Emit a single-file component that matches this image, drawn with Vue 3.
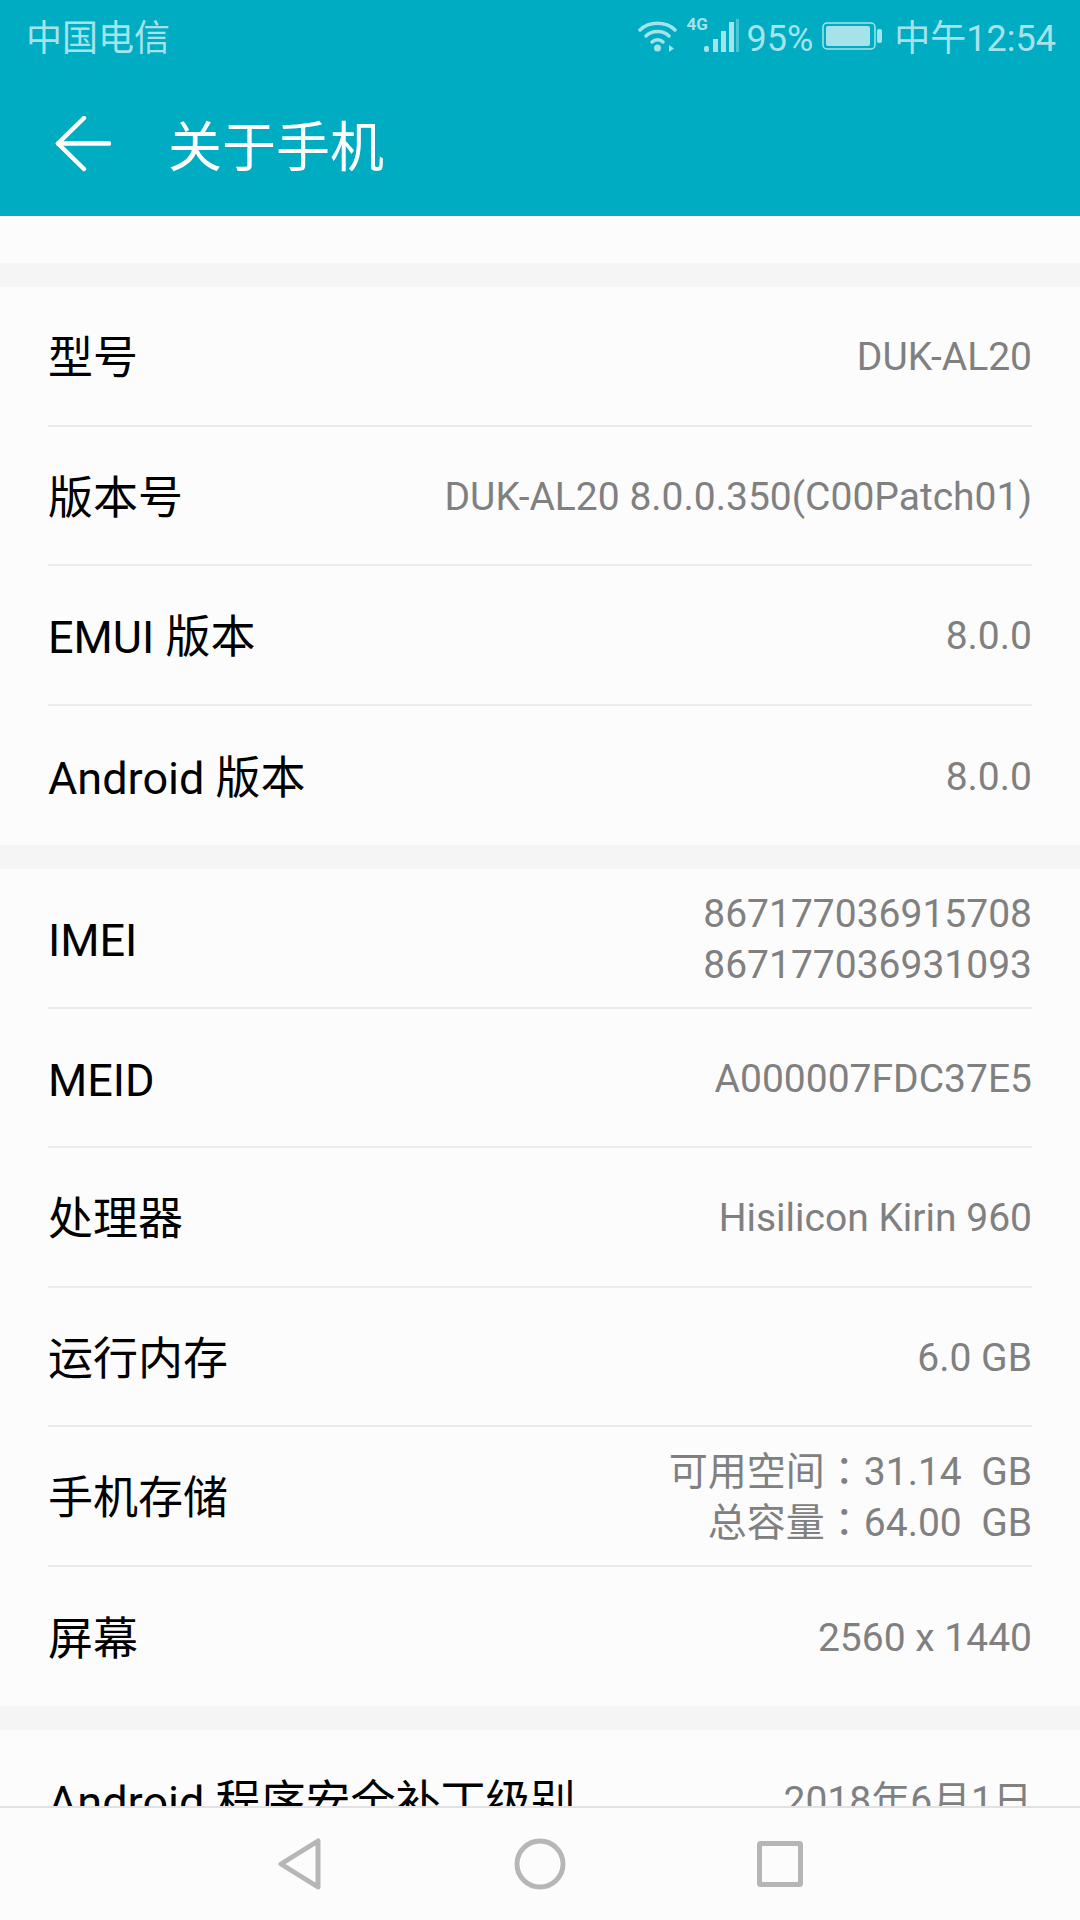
<script setup>
const sections = [
  [
    { label: '型号', value: ['DUK-AL20'] },
    { label: '版本号', value: ['DUK-AL20 8.0.0.350(C00Patch01)'] },
    { label: 'EMUI 版本', value: ['8.0.0'] },
    { label: 'Android 版本', value: ['8.0.0'] }
  ],
  [
    { label: 'IMEI', value: ['867177036915708', '867177036931093'] },
    { label: 'MEID', value: ['A000007FDC37E5'] },
    { label: '处理器', value: ['Hisilicon Kirin 960'] },
    { label: '运行内存', value: ['6.0 GB'] },
    // the colon sits centred here, which is what the TC face draws
    { label: '手机存储', value: ['可用空间：31.14  GB', '总容量：64.00  GB'], tc: true },
    { label: '屏幕', value: ['2560 x 1440'] }
  ],
  [{ label: 'Android 程序安全补丁级别', value: ['2018年6月1日'] }]
]
</script>

<template>
  <div class="page">
    <header class="appbar">
      <div class="status">
        <span>中国电信</span>
        <div class="status-right">
          <svg class="wifi" width="40" height="34" viewBox="0 0 40 34" fill="none" stroke="#a6e2ea" stroke-width="3.500" stroke-linecap="round">
            <path d="M2 11C11 2 28 2 37 11" />
            <path d="M8 17C14 11 25 11 31 17" />
            <path d="M14 23C17 20 22 20 25 23" />
            <circle cx="19.500" cy="29" r="3.500" fill="#a6e2ea" stroke="none" />
            <path d="M31 26V33L36 29.500Z" fill="#a6e2ea" stroke="none" />
          </svg>
          <div class="signal">
            <span class="net">4G</span>
            <svg width="36" height="36" viewBox="0 0 36 36" fill="#a6e2ea">
              <rect x="1" y="28" width="5" height="6" rx="2" />
              <rect x="10" y="21" width="5" height="13" />
              <rect x="18" y="13" width="5" height="21" />
              <rect x="26" y="4" width="5" height="30" />
              <rect x="33" y="1" width="3" height="33" opacity=".45" />
            </svg>
          </div>
          <span class="pct">95%</span>
          <svg class="battery" width="60" height="30" viewBox="0 0 60 30">
            <rect x="1" y="2" width="52" height="26" rx="4" fill="none" stroke="#a6e2ea" stroke-width="1.500" />
            <rect x="4" y="5" width="44" height="20" rx="2" fill="#a6e2ea" />
            <rect x="55" y="8" width="5" height="14" rx="2" fill="#a6e2ea" />
          </svg>
          <span class="time">中午12:54</span>
        </div>
      </div>
      <div class="toolbar">
        <svg width="56" height="56" viewBox="0 0 56 56" fill="none" stroke="#fff" stroke-width="4.500" stroke-linecap="round" stroke-linejoin="round">
          <path d="M29 2L3 27.500L29 53" />
          <path d="M3 27.500H54" />
        </svg>
        <h1>关于手机</h1>
      </div>
    </header>

    <main class="content">
      <section v-for="(rows, s) in sections" :key="s" class="group">
        <div v-for="row in rows" :key="row.label" class="row">
          <span class="label">{{ row.label }}</span>
          <div class="value" :class="{ tc: row.tc }">
            <div v-for="line in row.value" :key="line">{{ line }}</div>
          </div>
        </div>
      </section>
    </main>

    <nav class="navbar">
      <svg width="44" height="52" viewBox="0 0 44 52" fill="none" stroke="#b6b6b6" stroke-width="5" stroke-linejoin="round">
        <path d="M40 3V49L3 26Z" />
      </svg>
      <svg width="52" height="52" viewBox="0 0 52 52" fill="none" stroke="#b6b6b6" stroke-width="5">
        <circle cx="26" cy="26" r="23" />
      </svg>
      <svg width="46" height="46" viewBox="0 0 46 46" fill="none" stroke="#b6b6b6" stroke-width="5" stroke-linejoin="round">
        <rect x="2.500" y="2.500" width="41" height="41" rx="1" />
      </svg>
    </nav>
  </div>
</template>

<style>
body {
  background: #fcfcfc;
}
</style>

<style scoped>
.page {
  width: 1080px;
  height: 1920px;
  display: flex;
  flex-direction: column;
  overflow: hidden;
  background: #fcfcfc;
  font-family: Roboto, "Noto Sans CJK SC", sans-serif;
}

.appbar {
  height: 216px;
  flex: none;
  background: #00acc1;
}

.status {
  height: 72px;
  box-sizing: border-box;
  padding: 5px 24px 0 26px;
  display: flex;
  align-items: center;
  justify-content: space-between;
  font-size: 36px;
  line-height: 44px;
  color: #a6e2ea;
}

.status-right {
  display: flex;
  align-items: center;
}

.wifi {
  margin: 0 9px 5px 0;
}

.signal {
  position: relative;
  display: flex;
  width: 52px;
  justify-content: flex-end;
  margin: 0 8px 5px 0;
}

.net {
  position: absolute;
  left: 0;
  top: -3px;
  font-size: 17px;
  font-weight: 700;
  line-height: 18px;
}

.pct {
  margin-right: 9px;
}

.battery {
  margin: 0 12px 5px 0;
}

.toolbar {
  height: 144px;
  padding-left: 55px;
  display: flex;
  align-items: center;
  color: #fff;
}

.toolbar h1 {
  margin: 0 0 0 57px;
  padding-top: 9px;
  font-size: 54px;
  font-weight: 400;
  line-height: 64px;
}

.content {
  flex: 1;
  min-height: 0;
  overflow: hidden;
  padding-top: 47px;
}

.group {
  border-top: 24px solid #f5f5f5;
}

.row {
  height: 139.500px;
  box-sizing: border-box;
  margin: 0 48px;
  display: flex;
  align-items: center;
  justify-content: space-between;
  border-bottom: 2px solid #ebebeb;
}

.row:last-child {
  border-bottom: 0;
}

.label {
  padding-top: 7px;
  font-size: 45px;
  line-height: 56px;
  color: #000;
  white-space: pre;
}

.value {
  font-size: 39px;
  line-height: 51px;
  padding-top: 4px;
  color: #808080;
  text-align: right;
  white-space: pre;
}

.value.tc {
  font-family: Roboto, "Noto Sans CJK TC", sans-serif;
}

.navbar {
  height: 114px;
  flex: none;
  box-sizing: border-box;
  border-top: 2px solid #e2e2e2;
  background: #fcfcfc;
  display: grid;
  grid-template-columns: repeat(3, 240px);
  justify-content: center;
  justify-items: center;
  align-items: center;
}
</style>
